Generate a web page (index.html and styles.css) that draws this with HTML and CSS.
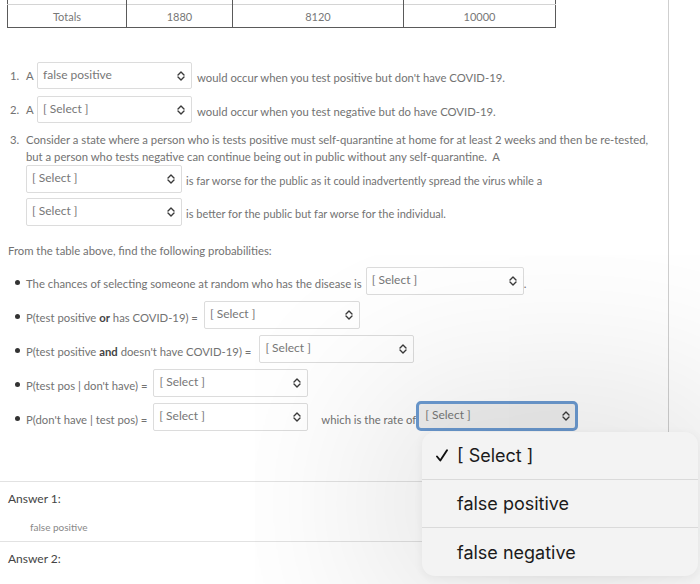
FILE: index.html
```html
<!DOCTYPE html>
<html>
<head>
<meta charset="utf-8">
<link rel="stylesheet" href="styles.css">
</head>
<body>
<div class="page">
  <div class="table-wrap">
    <table class="data">
      <tr class="cut"><td></td><td></td><td></td><td></td></tr>
      <tr><td>Totals</td><td>1880</td><td>8120</td><td>10000</td></tr>
    </table>
  </div>

  <div class="items">
    <div class="item">
      <span class="num">1.</span><span class="a">A</span>
      <span class="select w155"><span class="label">false positive</span><svg class="arrow" viewBox="0 0 8 10" width="8" height="10"><path d="M1 4 L4 1 L7 4 M1 6 L4 9 L7 6"/></svg></span>
      <span class="after">would occur when you test positive but don't have COVID-19.</span>
    </div>
    <div class="item">
      <span class="num">2.</span><span class="a">A</span>
      <span class="select w155"><span class="label">[ Select ]</span><svg class="arrow" viewBox="0 0 8 10" width="8" height="10"><path d="M1 4 L4 1 L7 4 M1 6 L4 9 L7 6"/></svg></span>
      <span class="after">would occur when you test negative but do have COVID-19.</span>
    </div>
    <div class="item3">
      <span class="num">3.</span>
      <div class="body">
        <p class="para">Consider a state where a person who is tests positive must self-quarantine at home for at least 2 weeks and then be re-tested,<br>but a person who tests negative can continue being out in public without any self-quarantine.&nbsp; A</p>
        <div class="row">
          <span class="select w156"><span class="label">[ Select ]</span><svg class="arrow" viewBox="0 0 8 10" width="8" height="10"><path d="M1 4 L4 1 L7 4 M1 6 L4 9 L7 6"/></svg></span>
          <span class="after narrow">is far worse for the public as it could inadvertently spread the virus while a</span>
        </div>
        <div class="row">
          <span class="select w156"><span class="label">[ Select ]</span><svg class="arrow" viewBox="0 0 8 10" width="8" height="10"><path d="M1 4 L4 1 L7 4 M1 6 L4 9 L7 6"/></svg></span>
          <span class="after narrow">is better for the public but far worse for the individual.</span>
        </div>
      </div>
    </div>
  </div>

  <p class="intro">From the table above, find the following probabilities:</p>

  <div class="bullets">
    <div class="bullet">
      <span class="dot"></span>
      <span class="btext">The chances of selecting someone at random who has the disease is</span>
      <span class="select w158"><span class="label">[ Select ]</span><svg class="arrow" viewBox="0 0 8 10" width="8" height="10"><path d="M1 4 L4 1 L7 4 M1 6 L4 9 L7 6"/></svg></span>
      <span class="btext">.</span>
    </div>
    <div class="bullet">
      <span class="dot"></span>
      <span class="btext wide">P(test positive <b>or</b> has COVID-19) =</span>
      <span class="select w156"><span class="label">[ Select ]</span><svg class="arrow" viewBox="0 0 8 10" width="8" height="10"><path d="M1 4 L4 1 L7 4 M1 6 L4 9 L7 6"/></svg></span>
    </div>
    <div class="bullet">
      <span class="dot"></span>
      <span class="btext wider">P(test positive <b>and</b> doesn't have COVID-19) =</span>
      <span class="select w155"><span class="label">[ Select ]</span><svg class="arrow" viewBox="0 0 8 10" width="8" height="10"><path d="M1 4 L4 1 L7 4 M1 6 L4 9 L7 6"/></svg></span>
    </div>
    <div class="bullet">
      <span class="dot"></span>
      <span class="btext wide">P(test pos | don't have) =</span>
      <span class="select w155"><span class="label">[ Select ]</span><svg class="arrow" viewBox="0 0 8 10" width="8" height="10"><path d="M1 4 L4 1 L7 4 M1 6 L4 9 L7 6"/></svg></span>
    </div>
    <div class="bullet">
      <span class="dot"></span>
      <span class="btext wide">P(don't have | test pos) =</span>
      <span class="select w155"><span class="label">[ Select ]</span><svg class="arrow" viewBox="0 0 8 10" width="8" height="10"><path d="M1 4 L4 1 L7 4 M1 6 L4 9 L7 6"/></svg></span>
      <span class="btext rate">which is the rate of</span>
      <span class="select focused"><span class="label">[ Select ]</span><svg class="arrow" viewBox="0 0 8 10" width="8" height="10"><path d="M1 4 L4 1 L7 4 M1 6 L4 9 L7 6"/></svg></span>
    </div>
  </div>

  <div class="answers">
    <div class="answer">
      <div class="ans-title">Answer 1:</div>
      <div class="ans-value">false positive</div>
    </div>
    <div class="answer">
      <div class="ans-title">Answer 2:</div>
    </div>
  </div>
</div>

<div class="popup">
  <div class="opt"><svg class="check" viewBox="0 0 12 13" width="12" height="13"><path d="M1 7.5 L4.3 11.5 L11 1.2"/></svg><span>[ Select ]</span></div>
  <div class="opt"><span>false positive</span></div>
  <div class="opt"><span>false negative</span></div>
</div>
</body>
</html>
```

FILE: styles.css
```css
html, body {
  margin: 0;
  padding: 0;
  background: #ffffff;
}
body {
  position: relative;
  width: 700px;
  height: 584px;
  overflow: hidden;
  font-family: Lato, "Open Sans", sans-serif;
  color: #727272;
  font-size: 11.3px;
}
.page {
  width: 668px;
  height: 584px;
  border-right: 1px solid #cfcfcf;
}

/* table */
.table-wrap {
  margin-top: -16px;
  padding-left: 7px;
}
.data {
  border-collapse: collapse;
  width: 549px;
  border-left: 1px solid #5a5a5a;
  border-right: 1px solid #5a5a5a;
  border-bottom: 1px solid #5a5a5a;
}
.data td {
  border-left: 1px solid #5a5a5a;
  border-top: 1px solid #d4d4d4;
  height: 20px;
  padding: 0;
  text-align: center;
  font-size: 11px;
  color: #777;
}
.data tr:last-child td { height: 21px; padding-top: 1px; }
.data td:nth-child(1) { width: 118px; border-left: none; }
.data td:nth-child(2) { width: 105px; }
.data td:nth-child(3) { width: 170px; }
.data .cut td { border-top: none; }

/* numbered items */
.items {
  margin-top: 34px;
  display: flex;
  flex-direction: column;
}
.item {
  display: flex;
  align-items: center;
  height: 27px;
  margin-bottom: 7px;
}
.num {
  width: 16px;
  padding-left: 10px;
  flex: none;
}
.a {
  width: 11px;
  flex: none;
}
.select {
  box-sizing: border-box;
  display: flex;
  align-items: center;
  justify-content: space-between;
  height: 27px;
  border: 1px solid #dcdcdc;
  border-radius: 2px;
  background: #fff;
  padding: 0 6px 0 5px;
  flex: none;
}
.select .label {
  font-size: 12px;
  color: #777;
  margin-top: -3px;
}
.arrow {
  fill: none;
  stroke: #3a3a3a;
  stroke-width: 1.4;
  stroke-linecap: round;
  stroke-linejoin: round;
}
.w154 { width: 154px; }
.w155 { width: 155px; }
.w156 { width: 156px; }
.w158 { width: 158px; }
.after {
  margin-left: 5px;
  margin-top: 3px;
  white-space: nowrap;
}
.after.narrow {
  margin-left: 4px;
  font-size: 11px;
}

.item3 {
  display: flex;
  margin-top: 1px;
}
.item3 .num {
  line-height: 17px;
}
.item3 .body {
  display: flex;
  flex-direction: column;
}
.para {
  margin: 0;
  line-height: 17px;
  white-space: nowrap;
}
.row {
  display: flex;
  align-items: center;
  height: 28px;
  margin-bottom: 5px;
}
.row .select { height: 28px; }

.intro {
  margin: 11px 0 0 8px;
  line-height: 17px;
}

/* bullets */
.bullets {
  margin-top: 8px;
  display: flex;
  flex-direction: column;
}
.bullet {
  display: flex;
  align-items: center;
  height: 28px;
  margin-bottom: 6px;
}
.bullet .select { height: 28px; }
.dot {
  width: 5px;
  height: 5px;
  border-radius: 50%;
  background: #333;
  margin-left: 15px;
  margin-right: 6px;
  margin-top: 3px;
  flex: none;
}
.btext {
  margin-top: 4px;
  margin-right: 4px;
  white-space: nowrap;
}
.btext.wide {
  margin-right: 6px;
}
.btext.wider {
  margin-right: 8px;
}
.btext b {
  font-weight: 700;
  color: #444;
}
.rate {
  margin-left: 13px;
  margin-right: 0;
}
.select.focused {
  width: 162px;
  height: 30px;
  margin-top: -2px;
  border: 3px solid #6c9bd2;
  border-radius: 5px;
  background: #f1f1f1;
  padding: 0 5px 0 6px;
}

/* answers */
.answers {
  margin-top: 44px;
}
.answer {
  border-top: 1px solid #e2e2e2;
  padding: 9px 0 0 8px;
  height: 50px;
}
.ans-title {
  font-size: 12px;
  color: #444;
  line-height: 16px;
}
.ans-value {
  margin: 14px 0 0 22px;
  font-size: 10px;
  color: #888;
}

/* popup menu */
.popup {
  position: absolute;
  left: 422px;
  top: 432px;
  width: 276px;
  height: 144px;
  border-radius: 13px;
  background: #f3f3f3;
  box-shadow: 0 0 180px 50px rgba(0, 0, 0, 0.11), 0 2px 10px rgba(0, 0, 0, 0.06);
  display: flex;
  flex-direction: column;
  overflow: hidden;
  font-family: Inter, "Liberation Sans", sans-serif;
  color: #1b1b1b;
}
.opt {
  height: 48px;
  display: flex;
  align-items: center;
  padding-left: 35px;
  font-size: 18px;
  border-bottom: 1px solid #dadada;
  box-sizing: border-box;
}
.opt:last-child { border-bottom: none; }
.check {
  margin-left: -21px;
  margin-right: 9px;
  fill: none;
  stroke: #111;
  stroke-width: 1.9;
  stroke-linecap: round;
  stroke-linejoin: round;
}
```
